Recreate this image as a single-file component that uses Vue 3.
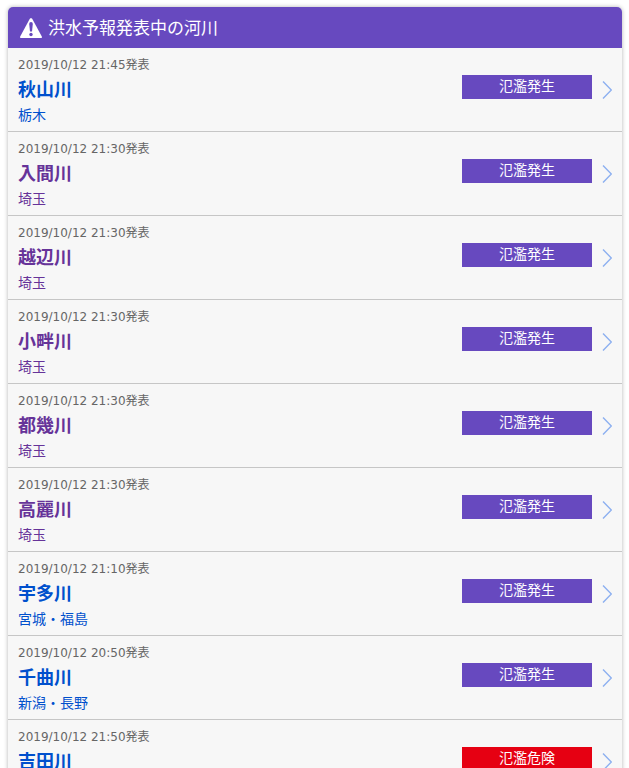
<script setup>
import { ref } from 'vue'

const rivers = ref([
  { time: '2019/10/12 21:45', name: '秋山川', area: '栃木', status: '氾濫発生' },
  { time: '2019/10/12 21:30', name: '入間川', area: '埼玉', status: '氾濫発生', visited: true },
  { time: '2019/10/12 21:30', name: '越辺川', area: '埼玉', status: '氾濫発生', visited: true },
  { time: '2019/10/12 21:30', name: '小畔川', area: '埼玉', status: '氾濫発生', visited: true },
  { time: '2019/10/12 21:30', name: '都幾川', area: '埼玉', status: '氾濫発生', visited: true },
  { time: '2019/10/12 21:30', name: '高麗川', area: '埼玉', status: '氾濫発生', visited: true },
  { time: '2019/10/12 21:10', name: '宇多川', area: '宮城・福島', status: '氾濫発生' },
  { time: '2019/10/12 20:50', name: '千曲川', area: '新潟・長野', status: '氾濫発生' },
  { time: '2019/10/12 21:50', name: '吉田川', area: '宮城', status: '氾濫危険' }
])
</script>

<template>
  <section class="flood">
    <h1 class="title">
      <svg class="warn" viewBox="0 0 22 20" aria-hidden="true">
        <path d="M11 0 L12.2 0.8 L21.8 18.5 Q22.2 20 21 20 H1 Q-0.2 20 0.2 18.5 L9.8 0.8 Z" fill="#fff" />
        <path d="M9.2 6 Q9.2 4 11 4 Q12.8 4 12.8 6 L12 13.5 H10 Z" fill="#6749bf" />
        <circle cx="11" cy="16.5" r="1.7" fill="#6749bf" />
      </svg>
      <span class="label">洪水予報発表中の河川</span>
    </h1>
    <ul class="list">
      <li v-for="river in rivers" :key="river.name">
        <a href="#" class="row" :class="{ visited: river.visited }">
          <div class="info">
            <p class="time">{{ river.time }}発表</p>
            <p class="name">{{ river.name }}</p>
            <p class="area">{{ river.area }}</p>
          </div>
          <span class="status" :class="{ danger: river.status === '氾濫危険' }">{{ river.status }}</span>
          <svg class="arrow" viewBox="0 0 10 18" aria-hidden="true">
            <path d="M1 0.5 L9.3 9 L1 17.5" fill="none" stroke="#8db0f0" stroke-width="1.4" />
          </svg>
        </a>
      </li>
    </ul>
  </section>
</template>

<style>
html {
  scrollbar-width: none;
}
body {
  background: #fff;
}
</style>

<style scoped>
.flood {
  margin: 7px 7px 7px 8px;
  border-radius: 5px;
  background: #f7f7f7;
  box-shadow: 0 0 4px rgba(0, 0, 0, 0.3);
  font-family: "Noto Sans CJK JP", sans-serif;
}
.title {
  display: flex;
  align-items: center;
  gap: 6px;
  height: 41px;
  margin: 0;
  padding: 0 12px;
  border-radius: 5px 5px 0 0;
  background: #6749bf;
  color: #fff;
  font-size: 17px;
  font-weight: normal;
}
.label {
  padding-bottom: 2px;
}
.warn {
  width: 22px;
  height: 20px;
}
.list {
  margin: 0;
  padding: 0;
  list-style: none;
}
.row {
  display: flex;
  align-items: center;
  box-sizing: border-box;
  height: 84px;
  padding: 0 10px;
  border-bottom: 1px solid #c6c6c6;
  color: #0050cd;
  text-decoration: none;
}
.row.visited {
  color: #639;
}
.info {
  flex: 1;
  align-self: flex-start;
  padding-top: 7px;
}
.info p {
  margin: 0;
}
.info .time {
  color: #666;
  font-family: "DejaVu Sans", "Noto Sans CJK JP", sans-serif;
  font-size: 12px;
  line-height: 20px;
}
.info .name {
  font-size: 18px;
  font-weight: bold;
  line-height: 26px;
}
.area {
  font-size: 14px;
  line-height: 26px;
}
.status {
  width: 130px;
  height: 24px;
  margin: 0 10px 6px 0;
  background: #6749bf;
  color: #fff;
  font-size: 14px;
  line-height: 20px;
  text-align: center;
}
.status.danger {
  background: #e60012;
}
.arrow {
  width: 10px;
  height: 18px;
}
</style>
